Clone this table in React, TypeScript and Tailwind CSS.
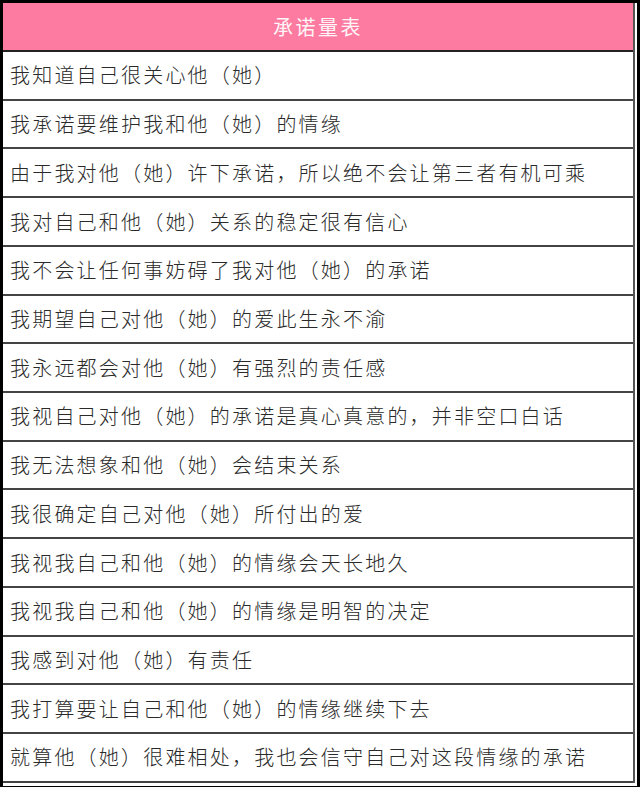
const ITEMS = [
  '我知道自己很关心他（她）',
  '我承诺要维护我和他（她）的情缘',
  '由于我对他（她）许下承诺，所以绝不会让第三者有机可乘',
  '我对自己和他（她）关系的稳定很有信心',
  '我不会让任何事妨碍了我对他（她）的承诺',
  '我期望自己对他（她）的爱此生永不渝',
  '我永远都会对他（她）有强烈的责任感',
  '我视自己对他（她）的承诺是真心真意的，并非空口白话',
  '我无法想象和他（她）会结束关系',
  '我很确定自己对他（她）所付出的爱',
  '我视我自己和他（她）的情缘会天长地久',
  '我视我自己和他（她）的情缘是明智的决定',
  '我感到对他（她）有责任',
  '我打算要让自己和他（她）的情缘继续下去',
  '就算他（她）很难相处，我也会信守自己对这段情缘的承诺',
];

const FONT = { fontFamily: '"Noto Sans CJK SC", "Noto Sans", sans-serif' };

export default function App() {
  return (
    <div
      className="w-[640px] h-[787px] bg-white border-l-[3px] border-t-[3px] border-r-[3px] border-b border-black pr-[2px] pb-[3px]"
      style={FONT}
    >
      <div className="flex flex-col border-r-2 border-[#555]">
        {/* Header */}
        <div className="h-[49px] flex items-center justify-center bg-[#fd7ba0] border-b-2 border-[#222]">
          <span className="text-[20px] tracking-[2.5px] text-[#fff4f7]">承诺量表</span>
        </div>

        {/* Rows */}
        {ITEMS.map((text, i) => (
          <div
            key={i}
            className="h-[48.73px] flex items-center pl-[7px] border-b-2 border-[#444]"
          >
            <span className="text-[20px] font-light tracking-[2.2px] text-[#2a2a2a] leading-none whitespace-nowrap">
              {text}
            </span>
          </div>
        ))}
      </div>
    </div>
  );
}
